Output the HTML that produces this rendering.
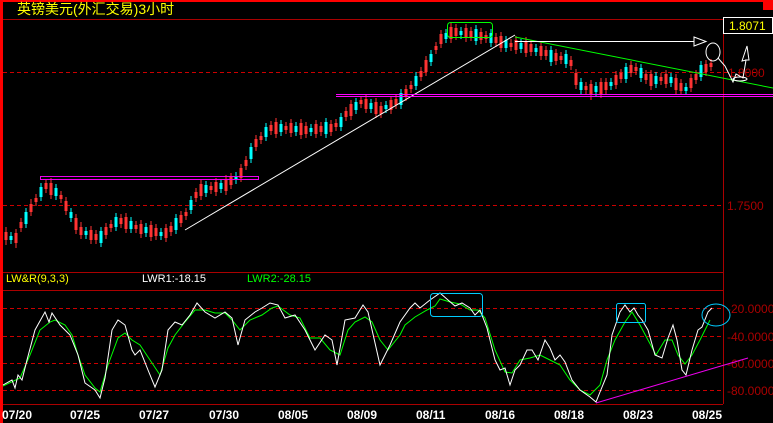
<!DOCTYPE html>
<html><head><meta charset="utf-8"><style>
html,body{margin:0;padding:0;background:#000;width:773px;height:423px;overflow:hidden}
svg{display:block}
text{font-family:"Liberation Sans","Noto Sans CJK SC",sans-serif}
</style></head><body>
<svg width="773" height="423" xmlns="http://www.w3.org/2000/svg">
<rect width="773" height="423" fill="#000"/>
<rect x="0" y="0" width="773" height="2" fill="#f00"/>
<rect x="0" y="0" width="3" height="423" fill="#f00"/>
<rect x="763" y="0" width="10" height="10" fill="#f00"/>
<text x="17" y="14" fill="#ff0" font-size="14" font-family="'WenQuanYi Zen Hei','Noto Sans CJK SC',sans-serif">英镑美元(外汇交易)3小时</text>
<g stroke="#a00" stroke-width="1" fill="none">
<line x1="3" y1="19.5" x2="773" y2="19.5"/>
<line x1="723.5" y1="19" x2="723.5" y2="404"/>
<line x1="3" y1="272.5" x2="723" y2="272.5"/>
<line x1="3" y1="290.5" x2="723" y2="290.5"/>
<line x1="3" y1="404.5" x2="723" y2="404.5"/>
</g>
<g stroke="#c00" stroke-width="1" stroke-dasharray="4,3">
<line x1="3" y1="72.5" x2="760" y2="72.5"/>
<line x1="3" y1="205.5" x2="723" y2="205.5"/>
<line x1="3" y1="308.5" x2="723" y2="308.5"/>
<line x1="3" y1="336.5" x2="723" y2="336.5"/>
<line x1="3" y1="363.5" x2="723" y2="363.5"/>
<line x1="3" y1="390.5" x2="723" y2="390.5"/>
</g>
<rect x="723.5" y="17.5" width="49" height="16" fill="#000" stroke="#fff"/>
<text x="729" y="30" fill="#ff0" font-size="12">1.8071</text>
<text x="728" y="77" fill="#a00" font-size="12">1.8000</text>
<text x="727" y="210" fill="#a00" font-size="12">1.7500</text>
<g fill="#a00" font-size="12">
<text x="727" y="313">-20.0000</text>
<text x="727" y="341">-40.0000</text>
<text x="727" y="368">-60.0000</text>
<text x="727" y="395">-80.0000</text>
</g>
<text x="6" y="282" fill="#ff0" font-size="11">LW&amp;R(9,3,3)</text>
<text x="142" y="282" fill="#fff" font-size="11">LWR1:-18.15</text>
<text x="247" y="282" fill="#0f0" font-size="11">LWR2:-28.15</text>
<g fill="#fff" font-size="12" font-weight="bold" font-family="'DejaVu Sans Mono',monospace">
<text x="2" y="419">07/20</text><text x="70" y="419">07/25</text><text x="139" y="419">07/27</text>
<text x="209" y="419">07/30</text><text x="278" y="419">08/05</text><text x="347" y="419">08/09</text>
<text x="416" y="419">08/11</text><text x="485" y="419">08/16</text><text x="554" y="419">08/18</text>
<text x="623" y="419">08/23</text><text x="692" y="419">08/25</text>
</g>
<!-- red candles -->
<path fill="none" stroke="#f33" stroke-width="3" d="M6 232V240M16 233V243M21 222V228M31 204V212M36 198V202M46 183V189M51 183V195M61 195V199M66 201V211M76 218V230M81 227V235M91 230V240M96 234V240M106 227V235M111 224V228M121 218V224M126 217V229M136 225V229M141 224V234M151 225V237M156 228V236M166 228V238M171 226V232M181 215V223M186 212V216M196 192V198M201 184V196M211 186V190M216 182V192M226 179V191M231 177V185M241 168V178M246 160V166M256 139V147M261 136V140M271 125V131M276 122V134M286 126V130M291 123V133M301 123V135M306 126V134M316 124V134M321 126V132M331 124V132M336 123V127M346 111V117M351 104V116M361 100V104M366 99V109M376 102V114M381 106V114M391 100V110M396 99V105M406 89V97M411 85V89M421 71V77M426 60V72M436 46V50M441 34V44M451 27V39M456 28V36M466 28V38M471 31V37M481 32V40M486 35V39M496 37V43M501 36V48M511 43V47M516 40V50M526 41V53M531 44V52M541 46V56M546 50V56M556 53V61M561 56V60M571 60V66M576 73V85M586 86V90M591 84V94M601 82V94M606 82V90M616 75V85M621 73V79M631 65V73M636 67V71M646 74V80M651 74V86M661 77V81M666 74V84M676 78V90M681 83V91M691 78V88M696 74V80M706 64V72M711 63V67"/>
<path fill="none" stroke="#f33" stroke-width="1" d="M6 227V245M16 229V248M21 218V232M31 199V216M36 194V206M46 179V193M51 178V199M61 191V203M66 197V215M76 214V234M81 222V239M91 226V244M96 230V244M106 223V239M111 220V232M121 214V228M126 213V233M136 221V233M141 220V238M151 221V241M156 224V240M166 224V242M171 222V236M181 211V227M186 208V220M196 188V202M201 180V200M211 182V194M216 178V196M226 175V195M231 173V189M241 164V182M246 156V170M256 135V151M261 132V144M271 121V135M276 118V138M286 122V134M291 119V137M301 119V139M306 122V138M316 120V138M321 122V136M331 120V136M336 119V131M346 107V121M351 100V120M361 96V108M366 95V113M376 98V118M381 102V118M391 96V114M396 95V109M406 85V101M411 81V93M421 67V81M426 56V76M436 42V54M441 30V48M451 23V43M456 24V40M466 24V42M471 27V41M481 28V44M486 31V43M496 33V47M501 32V52M511 39V51M516 36V54M526 37V57M531 40V56M541 42V60M546 46V60M556 49V65M561 52V64M571 56V70M576 69V89M586 82V94M591 80V100M601 78V98M606 78V94M616 71V89M621 69V83M631 61V77M636 63V75M646 70V84M651 70V90M661 73V85M666 70V88M676 74V94M681 79V95M691 74V92M696 70V84M706 60V76M711 59V71"/>
<!-- cyan candles -->
<path fill="none" stroke="#0ff" stroke-width="1" d="M11 232V244M26 208V228M41 183V201M56 184V200M71 208V222M86 227V239M101 227V247M116 213V231M131 217V233M146 223V237M161 228V240M176 214V234M191 196V214M206 181V197M221 179V193M236 172V184M251 143V163M266 123V141M281 120V136M296 122V136M311 124V136M326 118V138M341 113V131M356 98V114M371 99V113M386 101V113M401 89V109M416 72V90M431 50V66M446 29V43M461 27V39M476 25V45M491 29V47M506 36V52M521 39V53M536 44V56M551 46V66M566 50V68M581 78V94M596 82V96M611 78V90M626 63V83M641 64V82M656 72V88M671 73V87M686 83V95M701 61V81"/>
<path fill="none" stroke="#0ff" stroke-width="3" d="M11 236V240M26 212V224M41 187V197M56 188V196M71 212V218M86 231V235M101 231V243M116 217V227M131 221V229M146 227V233M161 232V236M176 218V230M191 200V210M206 185V193M221 183V189M236 176V180M251 147V159M266 127V137M281 124V132M296 126V132M311 128V132M326 122V134M341 117V127M356 102V110M371 103V109M386 105V109M401 93V105M416 76V86M431 54V62M446 33V39M461 31V35M476 29V41M491 33V43M506 40V48M521 43V49M536 48V52M551 50V62M566 54V64M581 82V90M596 86V92M611 82V86M626 67V79M641 68V78M656 76V84M671 77V83M686 87V91M701 65V77"/>
<!-- oscillator -->
<path fill="none" stroke="#0f0" stroke-width="1" d="M3 386L20 378L30 355L40 330L50 322L55 320L65 325L72 335L78 355L85 375L95 388L100 392L108 365L118 338L125 333L132 340L140 345L150 360L160 375L168 348L175 335L185 322L195 310L205 310L215 313L225 313L232 320L240 330L250 320L262 315L272 308L278 306L290 315L300 318L310 338L320 338L330 350L340 355L348 330L355 322L365 317L372 322L380 340L388 350L400 335L405 325L415 317L427 310L435 306L440 299L450 302L460 304L470 310L478 310L485 318L495 350L505 372L512 373L520 360L530 358L540 355L550 360L560 365L570 380L580 390L590 395L600 385L607 360L615 340L625 322L632 312L640 325L648 340L656 355L665 340L672 340L678 355L685 364L692 355L700 340L710 320"/>
<path fill="none" stroke="#fff" stroke-width="1" d="M3 385L12 380L15 388L18 375L22 380L27 360L35 330L45 312L49 322L52 313L60 325L70 335L78 355L85 383L95 390L100 398L105 378L112 330L118 320L125 325L132 350L135 355L140 350L148 370L155 387L162 370L168 330L175 322L182 325L190 315L197 303L205 312L215 318L225 312L232 318L238 345L245 320L255 312L262 308L270 303L278 305L285 318L295 315L305 330L315 350L325 335L332 340L337 365L345 320L355 318L363 305L368 312L380 365L390 345L400 322L410 308L415 303L420 308L430 300L440 293L448 300L455 306L462 303L470 308L475 315L480 310L487 328L495 360L500 370L505 368L510 385L515 370L520 365L527 350L532 350L538 360L545 340L550 348L555 360L560 355L565 362L572 380L580 390L590 397L596 402L600 392L607 375L612 335L620 312L625 305L630 312L634 308L638 315L642 320L648 330L655 355L662 358L668 338L673 325L677 340L682 370L686 375L692 350L698 330L702 327L708 312L712 308"/>
<!-- drawings -->
<line x1="185" y1="230" x2="515" y2="35" stroke="#fff"/>
<rect x="40.5" y="176.5" width="218" height="3" fill="none" stroke="#e0e"/>
<line x1="336" y1="94.5" x2="773" y2="94.5" stroke="#f0f"/>
<line x1="336" y1="96.5" x2="773" y2="96.5" stroke="#f0f"/>
<rect x="447.5" y="22.5" width="45" height="15" rx="3" fill="none" stroke="#0f0"/>
<line x1="515" y1="37" x2="773" y2="88" stroke="#0f0"/>
<line x1="515" y1="41.5" x2="694" y2="41.5" stroke="#fff"/>
<path d="M694 37 L706 41.5 L694 46 Z" fill="none" stroke="#fff"/>
<ellipse cx="713" cy="52" rx="7" ry="9" fill="none" stroke="#fff"/>
<path d="M718 58 L725 66 L733 82 L736 74 L743 78 L746 60 L742 61 L747 46 L749 60 L745 60" fill="none" stroke="#fff"/>
<ellipse cx="740" cy="79" rx="7" ry="2" fill="none" stroke="#fff"/>
<rect x="430.5" y="293.5" width="52" height="23" rx="3" fill="none" stroke="#0cf"/>
<rect x="616.5" y="303.5" width="29" height="19" rx="2" fill="none" stroke="#0cf"/>
<ellipse cx="716" cy="315" rx="14" ry="11" fill="none" stroke="#0cf"/>
<line x1="596" y1="403" x2="748" y2="358" stroke="#e0e"/>
</svg>
</body></html>
